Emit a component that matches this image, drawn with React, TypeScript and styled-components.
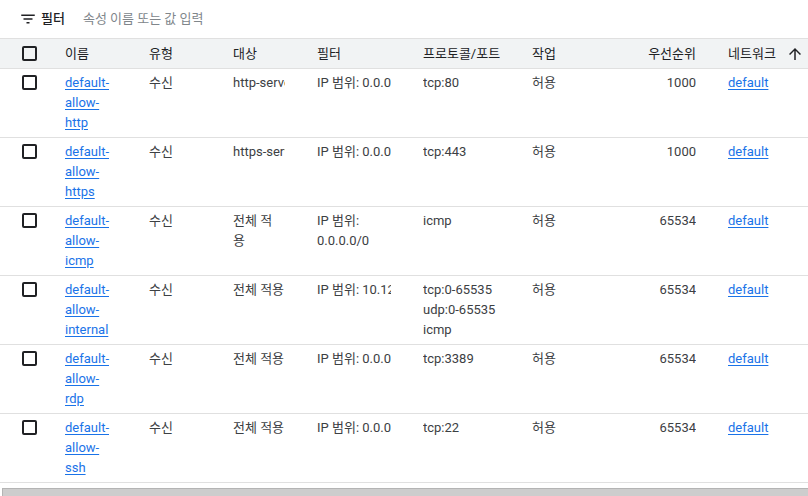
import React from 'react'
import styled, { createGlobalStyle } from 'styled-components'

const GlobalStyle = createGlobalStyle`
  html, body {
    margin: 0;
    padding: 0;
    background: #fff;
    overflow: hidden;
  }
  body {
    font-family: Roboto, "Noto Sans CJK KR", sans-serif;
    font-size: 13px;
    line-height: 20px;
    color: #3c4043;
  }
`;

const COLUMNS = '65px 84px 84px 84px 106px 109px 84px 112px 1fr';

const Page = styled.div`
  width: 808px;
  height: 496px;
  display: flex;
  flex-direction: column;
  overflow: hidden;
`;

const Toolbar = styled.div`
  height: 38px;
  display: flex;
  align-items: center;
  padding-left: 19px;
  gap: 4px;
`;

const FilterLabel = styled.span`
  font-size: 13px;
  font-weight: 500;
  color: #202124;
  margin-right: 14px;
`;

const FilterInput = styled.span`
  color: #80868b;
  font-size: 13px;
`;

const HeaderRow = styled.div`
  display: grid;
  grid-template-columns: ${COLUMNS};
  height: 29px;
  align-items: center;
  background: #f1f3f4;
  border-top: 1px solid #e0e0e0;
  border-bottom: 1px solid #e0e0e0;
  color: #202124;
`;

const Row = styled.div`
  display: grid;
  grid-template-columns: ${COLUMNS};
  padding: 4px 0;
  height: 60px;
  border-bottom: 1px solid #e0e0e0;
`;

const Cell = styled.div<{ $wrap?: boolean; $right?: boolean }>`
  margin-right: 32px;
  min-width: 0;
  overflow: hidden;
  white-space: ${({ $wrap }) => ($wrap ? 'normal' : 'nowrap')};
  text-align: ${({ $right }) => ($right ? 'right' : 'left')};
`;

const CheckCell = styled.div<{ $top?: boolean }>`
  padding-left: 22px;
  padding-top: ${({ $top }) => ($top ? '2px' : '0')};
  display: flex;
  align-items: ${({ $top }) => ($top ? 'flex-start' : 'center')};
`;

const Checkbox = styled.span`
  width: 15px;
  height: 15px;
  box-sizing: border-box;
  border: 2px solid #202124;
  border-radius: 2px;
`;

const Link = styled.a`
  color: #1a73e8;
  text-decoration: underline;
  text-underline-offset: 2px;
`;

const HeaderSort = styled.div`
  display: flex;
  align-items: center;
  gap: 10px;
`;

const Line = styled.div``;

const ScrollTrack = styled.div`
  margin-top: 5px;
  padding-left: 2px;
  height: 8px;
`;

const ScrollThumb = styled.div`
  height: 100%;
  background: #cdcdcd;
  border-top: 1px solid #b4b4b4;
  border-left: 1px solid #b4b4b4;
`;

const FilterIcon = () => (
  <svg width="18" height="18" viewBox="0 0 24 24" fill="#202124">
    <path d="M10 18h4v-2h-4v2zM3 6v2h18V6H3zm3 7h12v-2H6v2z" />
  </svg>
);

const ArrowUp = () => (
  <svg width="18" height="18" viewBox="0 0 24 24" fill="#202124">
    <path d="M4 12l1.41 1.41L11 7.83V20h2V7.83l5.58 5.59L20 12l-8-8-8 8z" />
  </svg>
);

type Rule = {
  name: string[];
  target: string[];
  filter: string;
  protocols: string[];
  priority: number;
  wrap?: boolean;
};

const rules: Rule[] = [
  { name: ['default-', 'allow-', 'http'], target: ['http-server'], filter: 'IP 범위: 0.0.0.0/0', protocols: ['tcp:80'], priority: 1000 },
  { name: ['default-', 'allow-', 'https'], target: ['https-server'], filter: 'IP 범위: 0.0.0.0/0', protocols: ['tcp:443'], priority: 1000 },
  { name: ['default-', 'allow-', 'icmp'], target: ['전체 적', '용'], filter: 'IP 범위: 0.0.0.0/0', protocols: ['icmp'], priority: 65534, wrap: true },
  { name: ['default-', 'allow-', 'internal'], target: ['전체 적용'], filter: 'IP 범위: 10.128.0.0/9', protocols: ['tcp:0-65535', 'udp:0-65535', 'icmp'], priority: 65534 },
  { name: ['default-', 'allow-', 'rdp'], target: ['전체 적용'], filter: 'IP 범위: 0.0.0.0/0', protocols: ['tcp:3389'], priority: 65534 },
  { name: ['default-', 'allow-', 'ssh'], target: ['전체 적용'], filter: 'IP 범위: 0.0.0.0/0', protocols: ['tcp:22'], priority: 65534 },
];

const App: React.FC = () => {
  return (
    <Page>
      <GlobalStyle />
      <Toolbar>
        <FilterIcon />
        <FilterLabel>필터</FilterLabel>
        <FilterInput>속성 이름 또는 값 입력</FilterInput>
      </Toolbar>
      <HeaderRow>
        <CheckCell>
          <Checkbox />
        </CheckCell>
        <Cell>이름</Cell>
        <Cell>유형</Cell>
        <Cell>대상</Cell>
        <Cell>필터</Cell>
        <Cell>프로토콜/포트</Cell>
        <Cell>작업</Cell>
        <Cell $right>우선순위</Cell>
        <HeaderSort>
          네트워크
          <ArrowUp />
        </HeaderSort>
      </HeaderRow>
      {rules.map(rule => (
        <Row key={rule.name.join('')}>
          <CheckCell $top>
            <Checkbox />
          </CheckCell>
          <Cell $wrap>
            {rule.name.map(part => (
              <Line key={part}>
                <Link href="#">{part}</Link>
              </Line>
            ))}
          </Cell>
          <Cell>수신</Cell>
          <Cell>
            {rule.target.map(t => (
              <Line key={t}>{t}</Line>
            ))}
          </Cell>
          <Cell $wrap={rule.wrap}>{rule.filter}</Cell>
          <Cell>
            {rule.protocols.map(p => (
              <Line key={p}>{p}</Line>
            ))}
          </Cell>
          <Cell>허용</Cell>
          <Cell $right>{rule.priority}</Cell>
          <Cell>
            <Link href="#">default</Link>
          </Cell>
        </Row>
      ))}
      <ScrollTrack>
        <ScrollThumb />
      </ScrollTrack>
    </Page>
  )
}

export default App
